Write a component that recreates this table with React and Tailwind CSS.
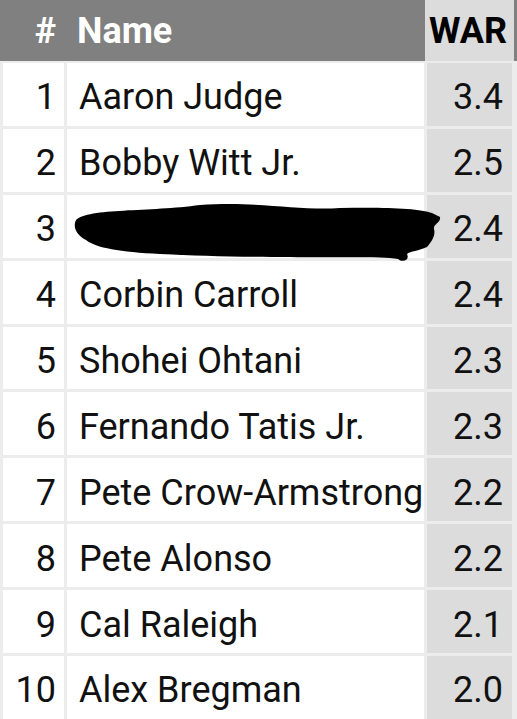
import React from "react";

const rows = [
  ["1", "Aaron Judge", "3.4"],
  ["2", "Bobby Witt Jr.", "2.5"],
  ["3", "", "2.4"],
  ["4", "Corbin Carroll", "2.4"],
  ["5", "Shohei Ohtani", "2.3"],
  ["6", "Fernando Tatis Jr.", "2.3"],
  ["7", "Pete Crow-Armstrong", "2.2"],
  ["8", "Pete Alonso", "2.2"],
  ["9", "Cal Raleigh", "2.1"],
  ["10", "Alex Bregman", "2.0"],
];

export default function App() {
  return (
    <div
      className="relative w-[517px] h-[719px] overflow-hidden bg-[#ececec] text-[#111]"
      style={{ fontFamily: "Roboto, 'Liberation Sans', sans-serif" }}
    >
      <div className="h-[61px] bg-[#808080] flex items-stretch">
        <div className="w-[64px] flex items-center justify-end pr-[8px] text-[36px] font-bold text-white">#</div>
        <div className="w-[360px] flex items-center pl-[13px] text-[36px] font-bold text-white">Name</div>
        <div className="w-[89px] ml-[1px] bg-[#dcdcdc] flex items-center justify-end pr-[7px] text-[36px] font-bold text-black">WAR</div>
      </div>
      <div className="mt-[2px] flex flex-col gap-[3px] pl-[3px]">
        {rows.map(([n, name, war]) => (
          <div key={n} className="h-[62.9px] shrink-0 flex gap-[3px] text-[36px] leading-none">
            <div className="w-[61px] bg-white flex items-center justify-end pr-[8px] pt-[6px]">{n}</div>
            <div className="w-[357px] bg-white flex items-center pl-[12px] pt-[6px] whitespace-nowrap overflow-hidden">{name}</div>
            <div className="w-[85px] bg-[#dcdcdc] flex items-center justify-end pr-[9px] pt-[6px]">{war}</div>
          </div>
        ))}
      </div>
      <svg className="absolute left-0 top-0 pointer-events-none" width="517" height="719" viewBox="0 0 517 719">
        <path
          d="M 76 220 C 88 208, 150 212, 200 205 C 260 201, 300 211, 340 208 C 380 207, 420 208, 432 213 L 440 217 C 441 223, 433 224, 434 229 C 436 236, 431 242, 427 247 C 419 251, 410 251, 407 254 C 410 260, 403 263, 398 259 C 380 256, 330 258, 290 257 C 240 257, 200 256, 160 254 C 120 252, 96 248, 86 240 C 78 236, 72 228, 76 220 Z"
          fill="#000"
        />
      </svg>
    </div>
  );
}
